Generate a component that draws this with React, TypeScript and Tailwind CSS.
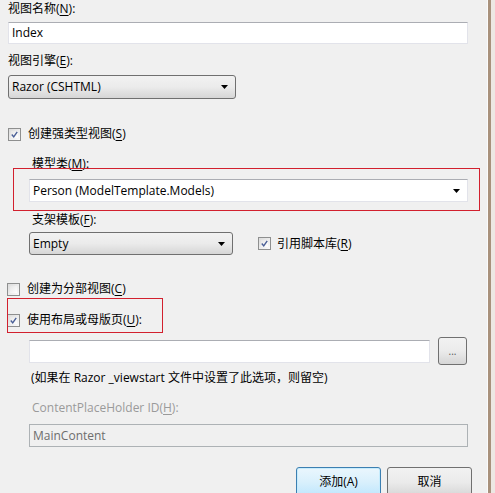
import React from 'react'

const font = {
  fontFamily: '"Open Sans", "Noto Sans CJK SC", sans-serif',
}

const Key = ({ k }: { k: string }) => (
  <>
    (<u className="underline-offset-2">{k}</u>)
  </>
)

const Arrow = () => (
  <svg width="7" height="4" viewBox="0 0 7 4" className="shrink-0">
    <path d="M0 0h7L3.5 4z" fill="#000" />
  </svg>
)

const CheckBox = ({ checked }: { checked: boolean }) => (
  <div className="w-[13px] h-[13px] border border-[#8e8f8f] bg-gradient-to-br from-[#dcdcdc] to-[#fbfbfb] p-[2px] shrink-0">
    <div className="w-full h-full bg-gradient-to-br from-[#e6e6e6] to-[#ffffff] flex items-center justify-center">
      {checked && (
        <svg width="9" height="9" viewBox="0 0 9 9">
          <path
            d="M1 4.5 L3.5 7.5 L8 1"
            stroke="#4a5f97"
            strokeWidth="1.8"
            fill="none"
          />
        </svg>
      )}
    </div>
  </div>
)

const Label = ({
  children,
  className = '',
}: {
  children: React.ReactNode
  className?: string
}) => (
  <div className={`h-[16px] leading-[16px] text-[12px] ${className}`}>
    {children}
  </div>
)

export default function App() {
  return (
    <div
      className="w-[495px] h-[493px] overflow-hidden flex bg-[#f0f0f0] text-black"
      style={font}
    >
      <div className="relative w-[487px] h-full px-[8px]">
        {/* view name */}
        <Label className="pt-[1px]">
          视图名称<Key k="N" />:
        </Label>
        <div className="mt-[6px] w-[460px] h-[22px] bg-white border border-[#e2e3ea] border-t-[#abadb3] flex items-center px-[3px] text-[12px]">
          Index
        </div>

        {/* view engine */}
        <Label className="mt-[9px]">
          视图引擎<Key k="E" />:
        </Label>
        <div className="mt-[6px] w-[228px] h-[24px] rounded-[3px] border border-[#707070] bg-gradient-to-b from-[#f2f2f2] via-[#ebebeb] to-[#d6d6d6] flex items-center justify-between pl-[3px] pr-[7px] text-[12px]">
          <span>Razor (CSHTML)</span>
          <Arrow />
        </div>

        {/* strongly typed */}
        <div className="mt-[27px] flex items-center gap-[7px] h-[16px] text-[12px]">
          <CheckBox checked />
          <span>
            创建强类型视图<Key k="S" />
          </span>
        </div>

        <div className="pl-[21px]">
          <Label className="mt-[14px] pl-[3px]">
            模型类<Key k="M" />:
          </Label>
          <div className="mt-[7px] w-[439px] h-[23px] bg-white border border-[#e2e3ea] border-t-[#abadb3] flex items-center justify-between pl-[3px] pr-[7px] text-[12px]">
            <span>Person (ModelTemplate.Models)</span>
            <Arrow />
          </div>

          <Label className="mt-[10px] pl-[3px]">
            支架模板<Key k="F" />:
          </Label>
          <div className="mt-[4px] flex items-center">
            <div className="w-[204px] h-[23px] rounded-[3px] border border-[#707070] bg-gradient-to-b from-[#f2f2f2] via-[#ebebeb] to-[#d6d6d6] flex items-center justify-between pl-[3px] pr-[7px] text-[12px]">
              <span>Empty</span>
              <Arrow />
            </div>
            <div className="ml-[25px] flex items-center gap-[6px] text-[12px]">
              <CheckBox checked />
              <span>
                引用脚本库<Key k="R" />
              </span>
            </div>
          </div>
        </div>

        {/* partial */}
        <div className="mt-[26px] -ml-[1px] flex items-center gap-[7px] h-[16px] text-[12px]">
          <CheckBox checked={false} />
          <span>
            创建为分部视图<Key k="C" />
          </span>
        </div>
        <div className="mt-[15px] -ml-[1px] flex items-center gap-[7px] h-[16px] text-[12px]">
          <CheckBox checked />
          <span>
            使用布局或母版页<Key k="U" />:
          </span>
        </div>

        <div className="pl-[21px]">
          <div className="mt-[9px] flex items-center gap-[8px]">
            <div className="w-[401px] h-[23px] bg-white border border-[#e2e3ea] border-t-[#abadb3]" />
            <div className="w-[29px] h-[28px] rounded-[3px] border border-[#707070] bg-gradient-to-b from-[#f2f2f2] via-[#ebebeb] to-[#d6d6d6] flex items-center justify-center text-[10px] leading-none text-[#555]">
              ...
            </div>
          </div>
          <Label className="mt-[5px] pl-[2px]">
            (如果在 Razor _viewstart 文件中设置了此选项，则留空)
          </Label>

          <Label className="mt-[14px] pl-[3px] text-[#9a9a9a]">
            ContentPlaceHolder ID<Key k="H" />:
          </Label>
          <div className="mt-[8px] w-[439px] h-[23px] bg-[#f0f0f0] border border-[#adb2b5] flex items-center px-[3px] text-[12px] text-[#6d6d6d]">
            MainContent
          </div>
        </div>

        {/* buttons */}
        <div className="mt-[20px] flex justify-end gap-[6px] pr-[7px]">
          <div className="w-[85px] h-[30px] rounded-[3px] border border-[#3c7fb1] bg-gradient-to-b from-[#eaf6fd] via-[#d9f0fc] to-[#bee6fd] flex items-center justify-center text-[12px] shadow-[inset_0_0_0_1px_#c6ecfd]">
            添加(A)
          </div>
          <div className="w-[85px] h-[30px] rounded-[3px] border border-[#707070] bg-gradient-to-b from-[#f2f2f2] via-[#ebebeb] to-[#d6d6d6] flex items-center justify-center text-[12px]">
            取消
          </div>
        </div>

        {/* annotation boxes */}
        <div className="absolute left-[13px] top-[168px] w-[467px] h-[43px] border border-[#d2202e] pointer-events-none" />
        <div className="absolute left-[7px] top-[298px] w-[156px] h-[35px] border border-[#d2202e] pointer-events-none" />
      </div>
      <div className="w-[1px] h-full bg-[#fbfbfb]" />
      <div className="w-[3px] h-full bg-[#a8917c]" />
      <div className="w-[4px] h-full bg-[#ede8e4]" />
    </div>
  )
}
